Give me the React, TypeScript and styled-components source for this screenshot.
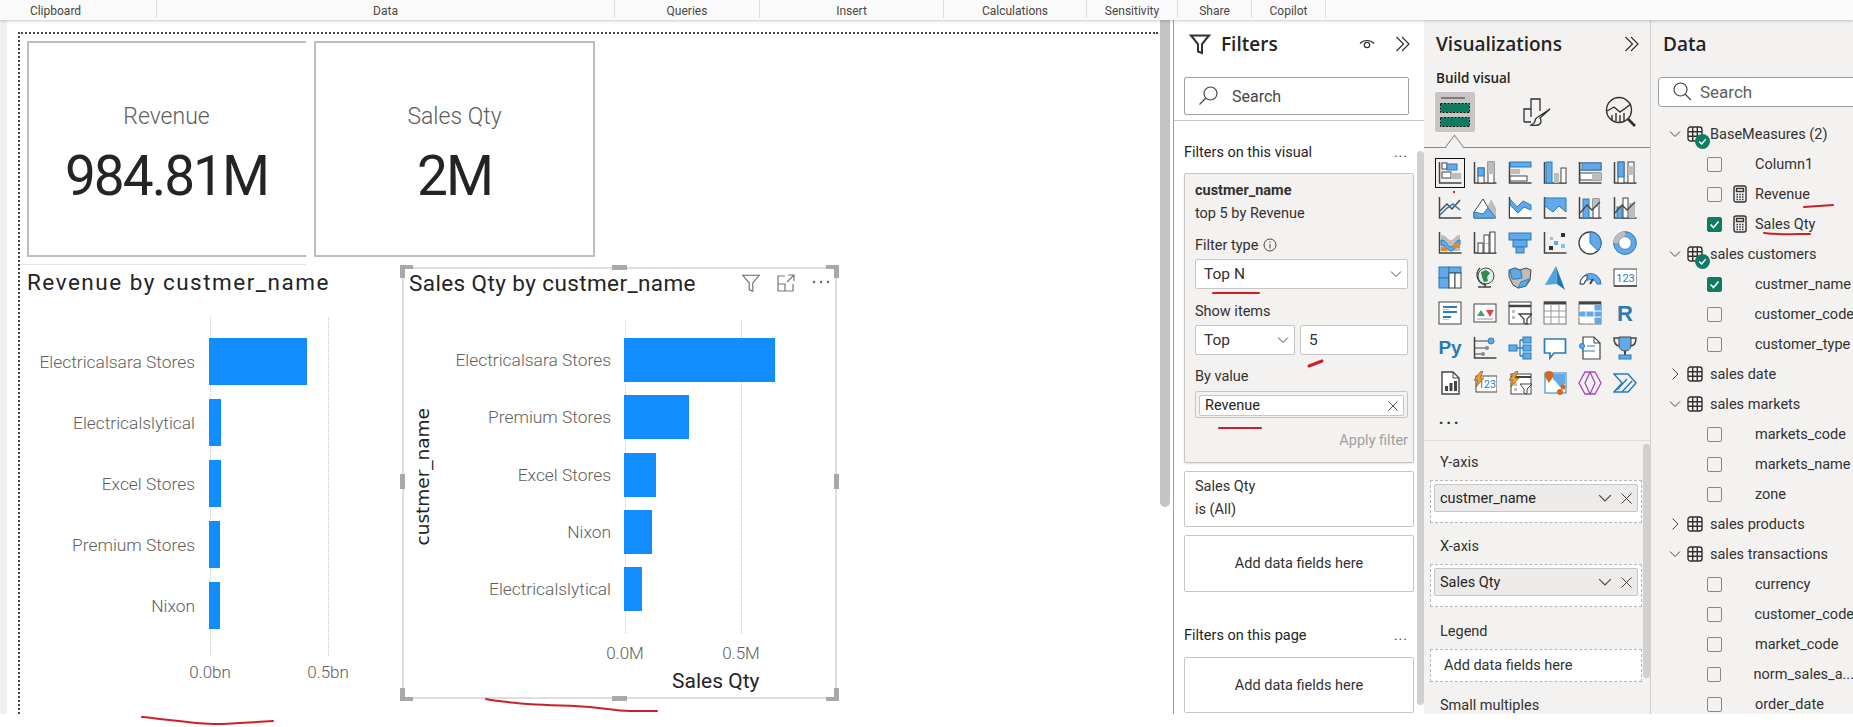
import { FunctionComponent, ReactNode } from 'react';
import styled, { createGlobalStyle, css } from 'styled-components';

const UI_FONT = '"Roboto", "Open Sans", sans-serif';
const DIN_FONT = '"Roboto", "Liberation Sans", sans-serif';
const DARK = '#444';
const BLUE = '#62a9e9';
const STROKE = '#2b7cb8';
const GRAY = '#bdbdbd';

const GlobalStyle = createGlobalStyle`
  * { box-sizing: border-box; }
  html, body { margin: 0; padding: 0; background: #fff; }
  body { font-family: ${UI_FONT}; color: #252423; }
`;

const Page = styled.div`
  position: relative;
  width: 1853px;
  height: 727px;
  overflow: hidden;
  background: #fff;
`;

const Ribbon = styled.div`
  position: relative;
  z-index: 2;
  display: flex;
  height: 20px;
  background: #fafafa;
  box-shadow: 0 1px 3px rgba(0, 0, 0, 0.22);
`;

const RibbonGroup = styled.div<{ $w: number; $pr?: number }>`
  width: ${p => p.$w}px;
  padding-right: ${p => p.$pr || 0}px;
  height: 18px;
  border-right: 1px solid #dcdcdc;
  text-align: center;
  font-size: 12px;
  line-height: 23px;
  color: #484644;
`;

const Main = styled.div`
  display: flex;
  height: 694px;
  overflow: hidden;
`;

const Gutter = styled.div`
  flex: none;
  width: 7px;
  background: #f0efee;
`;

const Report = styled.div`
  flex: none;
  width: 1140px;
  margin: 12px 0 0 11px;
  border-top: 2px dotted #444;
  border-left: 2px dotted #444;
`;

const CanvasScroll = styled.div`
  flex: none;
  width: 10px;
  height: 487px;
  margin-left: 2px;
  margin-right: 3px;
  border-radius: 0 0 5px 5px;
  background: #c4c4c4;
`;

const CardRow = styled.div`
  display: flex;
  gap: 8px;
  padding: 7px 0 0 7px;
`;

const KpiCard = styled.div<{ $w: number; $open?: boolean }>`
  display: flex;
  flex-direction: column;
  align-items: center;
  width: ${p => p.$w}px;
  height: 216px;
  padding-top: 58px;
  border: 2px solid #bdbdbd;
  ${p => p.$open && 'border-right: 0; padding-right: 2px;'}
  font-family: ${DIN_FONT};
`;

const KpiLabel = styled.div`
  height: 32px;
  font-size: 23px;
  font-weight: 300;
  line-height: 32px;
  color: #605e5c;
`;

const KpiValue = styled.div`
  margin-top: 11px;
  font-size: 55px;
  line-height: 64px;
  letter-spacing: -2px;
  color: #252423;
`;

const ChartRow = styled.div`
  display: flex;
  align-items: flex-start;
  margin-top: 7px;
`;

const ChartA = styled.div`
  width: 382px;
`;

const TopRule = styled.div`
  width: 286px;
  height: 1px;
  background: #e4e4e4;
`;

const ChartTitle = styled.div<{ $pl: number; $spacing?: number }>`
  padding-left: ${p => p.$pl}px;
  font-family: ${DIN_FONT};
  font-size: 22.5px;
  letter-spacing: ${p => p.$spacing || 0}px;
  line-height: 34px;
  white-space: nowrap;
  color: #252423;
`;

const PlotA = styled.div`
  position: relative;
  margin-top: 18px;
  width: 340px;
`;

const BarRows = styled.div<{ $top: number; $bottom: number; $gap: number }>`
  display: flex;
  flex-direction: column;
  gap: ${p => p.$gap}px;
  padding: ${p => p.$top}px 0 ${p => p.$bottom}px;
`;

const BarRow = styled.div<{ $label: number; $gap: number; $h: number }>`
  display: grid;
  grid-template-columns: ${p => p.$label}px 1fr;
  column-gap: ${p => p.$gap}px;
  align-items: center;
  height: ${p => p.$h}px;
`;

const BarLabel = styled.div`
  text-align: right;
  font-family: ${DIN_FONT};
  font-size: 17.4px;
  font-weight: 300;
  white-space: nowrap;
  color: #605e5c;
`;

const Bar = styled.div`
  position: relative;
  z-index: 1;
  height: 100%;
  background: #118dff;
`;

const GridLine = styled.div<{ $left: number }>`
  position: absolute;
  top: 0;
  bottom: 0;
  left: ${p => p.$left}px;
  border-left: 1px dotted #c8c6c4;
`;

const Ticks = styled.div<{ $pl: number; $mt: number }>`
  display: flex;
  margin-top: ${p => p.$mt}px;
  padding-left: ${p => p.$pl}px;
`;

const Tick = styled.div<{ $w: number }>`
  width: ${p => p.$w}px;
  text-align: center;
  font-family: ${DIN_FONT};
  font-size: 17px;
  font-weight: 300;
  line-height: 20px;
  color: #605e5c;
`;

const ChartB = styled.div`
  position: relative;
  width: 435px;
  height: 432px;
  margin-top: 3px;
  border: 2px solid #dedede;
`;

const ChartHead = styled.div`
  display: flex;
  align-items: center;
  justify-content: space-between;
  height: 28px;
  padding-right: 4px;
`;

const HeadIcons = styled.div`
  display: flex;
  gap: 15px;
`;

const ChartBody = styled.div`
  display: flex;
  margin-top: 23px;
`;

const AxisCol = styled.div`
  display: flex;
  align-items: center;
  justify-content: center;
  width: 36px;
  height: 313px;
`;

const VerticalTitle = styled.div`
  writing-mode: vertical-rl;
  transform: rotate(180deg);
  font-family: "DejaVu Sans", sans-serif;
  font-size: 18.5px;
  white-space: nowrap;
  color: #252423;
`;

const PlotB = styled.div`
  width: 390px;
`;

const PlotBInner = styled.div`
  position: relative;
`;

const AxisName = styled.div`
  margin-top: 8px;
  padding-left: 232px;
  font-family: ${DIN_FONT};
  font-size: 21px;
  line-height: 20px;
  color: #252423;
`;

const handlePlaces = {
  tl: 'left: -4px; top: -4px; width: 13px; height: 13px; border-top: 4px solid; border-left: 5px solid;',
  tr: 'right: -4px; top: -4px; width: 13px; height: 13px; border-top: 4px solid; border-right: 5px solid;',
  bl: 'left: -4px; bottom: -4px; width: 13px; height: 13px; border-bottom: 4px solid; border-left: 5px solid;',
  br: 'right: -4px; bottom: -4px; width: 13px; height: 13px; border-bottom: 4px solid; border-right: 5px solid;',
  t: 'left: 208px; top: -4px; width: 15px; height: 5px; background: currentColor;',
  b: 'left: 208px; bottom: -4px; width: 15px; height: 5px; background: currentColor;',
  l: 'left: -4px; top: 205px; width: 5px; height: 15px; background: currentColor;',
  r: 'right: -4px; top: 205px; width: 5px; height: 15px; background: currentColor;',
};

const Handle = styled.span<{ $at: keyof typeof handlePlaces }>`
  position: absolute;
  z-index: 2;
  color: #a8a8a8;
  ${p => css`${handlePlaces[p.$at]}`}
`;

const FiltersPane = styled.div`
  flex: none;
  position: relative;
  width: 251px;
  border-left: 1px solid #a19f9d;
  background: #fff;
`;

const PaneHead = styled.div<{ $pl: number }>`
  display: flex;
  align-items: center;
  height: 44px;
  margin-top: 2px;
  padding-left: ${p => p.$pl}px;
`;

const PaneTitle = styled.div<{ $ml?: number }>`
  margin-left: ${p => p.$ml || 0}px;
  font-family: "Open Sans", sans-serif;
  font-size: 19px;
  font-weight: 600;
  color: #252423;
`;

const PaneActions = styled.div<{ $gap: number; $right: number }>`
  display: flex;
  align-items: center;
  gap: ${p => p.$gap}px;
  margin-left: auto;
  margin-right: ${p => p.$right}px;
`;

const SearchBox = styled.div`
  display: flex;
  align-items: center;
  gap: 14px;
  height: 38px;
  margin: 11px 15px 0 10px;
  padding-left: 13px;
  border: 1px solid #a19f9d;
  border-radius: 2px;
  font-size: 16px;
  color: #484644;
`;

const PaneRule = styled.div`
  height: 1px;
  margin-top: 5px;
  background: #c8c6c4;
`;

const FiltersBody = styled.div`
  position: relative;
  padding-left: 10px;
  height: 573px;
`;

const PaneScroll = styled.div<{ $top: number; $h: number; $right: number }>`
  position: absolute;
  top: ${p => p.$top}px;
  right: ${p => p.$right}px;
  width: 7px;
  height: ${p => p.$h}px;
  border-radius: 4px;
  background: #d2d0ce;
`;

const SectionHead = styled.div<{ $mt: number }>`
  display: flex;
  align-items: center;
  justify-content: space-between;
  width: 225px;
  height: 24px;
  margin-top: ${p => p.$mt}px;
  font-size: 14.5px;
`;

const SectionDots = styled.span`
  letter-spacing: 1px;
  font-size: 14px;
  margin-right: 1px;
  color: #484644;
`;

const FilterCard = styled.div`
  width: 230px;
  height: 290px;
  margin-top: 9px;
  padding: 6px 5px 0 10px;
  background: #f3f2f1;
  border: 1px solid #c8c6c4;
  border-radius: 2px;
  box-shadow: 0 1px 2px rgba(0, 0, 0, 0.12);
`;

const CardText = styled.div<{ $mt?: number; $bold?: boolean; $muted?: boolean; $right?: boolean }>`
  display: flex;
  align-items: center;
  gap: 5px;
  justify-content: ${p => (p.$right ? 'flex-end' : 'flex-start')};
  height: 20px;
  margin-top: ${p => p.$mt || 0}px;
  font-size: 14.5px;
  font-weight: ${p => (p.$bold ? 700 : 400)};
  color: ${p => (p.$muted ? '#a19f9d' : '#323130')};
`;

const SelectBox = styled.div<{ $w: number; $mt?: number }>`
  display: flex;
  align-items: center;
  justify-content: space-between;
  width: ${p => p.$w}px;
  height: 30px;
  margin-top: ${p => p.$mt || 0}px;
  padding: 0 5px 0 8px;
  background: #fff;
  border: 1px solid #c8c6c4;
  border-radius: 2px;
  font-size: 15.5px;
  color: #323130;
`;

const SelectPair = styled.div`
  display: flex;
  gap: 5px;
  margin-top: 4px;
`;

const ValueWell = styled.div`
  height: 27px;
  margin-top: 5px;
  padding: 3px;
  border: 1px solid #c8c6c4;
  border-radius: 2px;
`;

const ValueChip = styled.div`
  display: flex;
  align-items: center;
  justify-content: space-between;
  height: 21px;
  padding: 0 5px;
  background: #fff;
  border: 1px solid #c8c6c4;
  border-radius: 2px;
  font-size: 14.5px;
`;

const PlainCard = styled.div<{ $mt: number; $h: number; $center?: boolean }>`
  display: flex;
  flex-direction: column;
  ${p => (p.$center ? 'align-items: center; justify-content: center;' : 'gap: 3px; padding: 5px 0 0 10px;')}
  width: 230px;
  height: ${p => p.$h}px;
  margin-top: ${p => p.$mt}px;
  border: 1px solid #c8c6c4;
  border-radius: 2px;
  font-size: 14.5px;
  color: #323130;
`;

const PlainLine = styled.div`
  height: 20px;
  line-height: 20px;
`;

const VizPane = styled.div`
  flex: none;
  position: relative;
  width: 227px;
  background: #f3f2f1;
  border-right: 1px solid #d2d0ce;
`;

const BuildLabel = styled.div`
  height: 20px;
  margin: 2px 0 0 12px;
  font-family: "Open Sans", sans-serif;
  font-size: 13.5px;
  font-weight: 600;
  line-height: 20px;
`;

const TabRow = styled.div`
  display: grid;
  grid-template-columns: 40px 40px 40px;
  column-gap: 43px;
  margin: 4px 0 0 11px;
`;

const VizTab = styled.div<{ $on?: boolean }>`
  display: flex;
  align-items: center;
  justify-content: center;
  height: 40px;
  background: ${p => (p.$on ? '#c8c6c4' : 'transparent')};
  border-radius: 2px;
`;

const TabRule = styled.div`
  position: relative;
  height: 16px;
  border-bottom: 1px solid #8a8886;
  &::after {
    content: '';
    position: absolute;
    left: 23px;
    bottom: -7px;
    width: 14px;
    height: 14px;
    background: #f3f2f1;
    border-top: 1px solid #8a8886;
    border-left: 1px solid #8a8886;
    transform: rotate(45deg) skew(8deg, 8deg);
  }
`;

const VizGrid = styled.div`
  position: relative;
  display: grid;
  grid-template-columns: repeat(6, 35px);
  grid-auto-rows: 35px;
  height: 293px;
  padding: 7.5px 0 0 8.5px;
  border-bottom: 1px solid #dedcda;
`;

const VizCell = styled.div<{ $on?: boolean }>`
  display: flex;
  align-items: center;
  justify-content: center;
  & > div {
    display: flex;
    align-items: center;
    justify-content: center;
    width: 30px;
    height: 30px;
    border: ${p => (p.$on ? '1px solid #111' : '0')};
  }
`;

const RedDot = styled.span`
  position: absolute;
  left: 29px;
  top: 43px;
  width: 2px;
  height: 2px;
  background: #d9252e;
`;

const MoreDots = styled.div`
  font-size: 17px;
  font-weight: 700;
  letter-spacing: 2.5px;
  color: #323130;
`;

const FieldWells = styled.div`
  position: relative;
  height: 273px;
  padding-top: 12px;
`;

const WellLabel = styled.div<{ $mt?: number; $last?: boolean }>`
  height: ${p => (p.$last ? 17 : 20)}px;
  margin: ${p => p.$mt || 0}px 0 ${p => (p.$last ? 0 : 7)}px 16px;
  font-size: 14.5px;
  line-height: ${p => (p.$last ? 17 : 20)}px;
  color: #323130;
`;

const Well = styled.div<{ $h: number }>`
  width: 212px;
  height: ${p => p.$h}px;
  margin-left: 6px;
  padding: 3px;
  background: #fff;
  border: 1px dashed #b9b7b5;
  font-size: 14.5px;
`;

const WellHint = styled.div`
  padding-left: 10px;
  line-height: 25px;
  color: #323130;
`;

const WellPill = styled.div`
  display: flex;
  align-items: center;
  gap: 9px;
  height: 28px;
  padding: 0 5px;
  background: #edebe9;
  border: 1px solid #c8c6c4;
  border-radius: 2px;
  span { margin-right: auto; }
`;

const DataPane = styled.div`
  flex: none;
  width: 203px;
  background: #f3f2f1;
  overflow: hidden;
`;

const DataSearch = styled.div`
  display: flex;
  align-items: center;
  gap: 7px;
  width: 220px;
  height: 30px;
  margin: 11px 0 0 7px;
  padding-left: 14px;
  background: #fff;
  border: 1px solid #a19f9d;
  border-radius: 4px;
  font-size: 17px;
  color: #605e5c;
`;

const Tree = styled.div`
  margin-top: 12px;
`;

const TreeRow = styled.div<{ $field?: boolean }>`
  display: flex;
  align-items: center;
  height: 30px;
  padding-left: ${p => (p.$field ? 56 : 18)}px;
  font-size: 14.5px;
  white-space: nowrap;
  color: #323130;
`;

const TableSlot = styled.span`
  position: relative;
  display: flex;
  margin-left: 6px;
  margin-right: 7px;
`;

const Badge = styled.span`
  position: absolute;
  left: 8px;
  top: 8px;
  display: flex;
  align-items: center;
  justify-content: center;
  width: 15px;
  height: 15px;
  border-radius: 50%;
  background: #0f7b63;
`;

const CheckBox = styled.span<{ $on?: boolean }>`
  display: flex;
  align-items: center;
  justify-content: center;
  width: 15px;
  height: 15px;
  border: 1px solid ${p => (p.$on ? '#0f7b63' : '#8a8886')};
  border-radius: 2px;
  background: ${p => (p.$on ? '#0f7b63' : 'transparent')};
`;

const CalcSlot = styled.span`
  display: flex;
  justify-content: center;
  width: 16px;
  margin: 0 7px 0 10px;
`;

const Scribbles = styled.svg`
  position: absolute;
  inset: 0;
  z-index: 3;
  pointer-events: none;
`;

const Chevron: FunctionComponent<{ dir?: 'down' | 'right'; size?: number }> = ({ dir = 'down', size = 12 }) => (
  <svg width={size} height={size} viewBox="0 0 12 12" fill="none" stroke="#484644" strokeWidth="1">
    <path d={dir === 'down' ? 'M1 3.5 6 8.5 11 3.5' : 'M3.5 0.5 9 6 3.5 11.5'} />
  </svg>
);

const Cross: FunctionComponent<{ size?: number }> = ({ size = 11 }) => (
  <svg width={size} height={size} viewBox="0 0 11 11" stroke="#484644" strokeWidth="1">
    <path d="M0.5 0.5 10.5 10.5M10.5 0.5 0.5 10.5" />
  </svg>
);

const DoubleChevron = () => (
  <svg width="16" height="16" viewBox="0 0 16 16" fill="none" stroke="#323130" strokeWidth="1.2">
    <path d="M1.5 1 8.5 8 1.5 15M7 1 14 8 7 15" />
  </svg>
);

const Funnel: FunctionComponent<{ size?: number; light?: boolean }> = ({ size = 22, light }) => (
  <svg width={size} height={size} viewBox="0 0 22 22" fill="none" stroke={light ? '#666' : '#323130'} strokeWidth={light ? 1.2 : 2}>
    <path d="M2 2.5h18l-7 8.5v9l-4-1.5V11z" />
  </svg>
);

const Expand = () => (
  <svg width="20" height="20" viewBox="0 0 20 20" fill="none" stroke="#777" strokeWidth="1.2">
    <path d="M9 3H2v15h15v-7M2 11h7v7M12 2h6v6M18 2l-7 7" />
  </svg>
);

const HeadDots = () => (
  <svg width="20" height="20" viewBox="0 0 20 20" fill="#666">
    <circle cx="3" cy="9" r="1.2" />
    <circle cx="10" cy="9" r="1.2" />
    <circle cx="17" cy="9" r="1.2" />
  </svg>
);

const Eye = () => (
  <svg width="16" height="14" viewBox="0 0 16 14" fill="none" stroke="#323130" strokeWidth="1.2">
    <path d="M1 6.5C4.5 2.500 11.500 2.500 15 6.500" />
    <circle cx="8" cy="8" r="2.700" />
  </svg>
);

const Lens: FunctionComponent<{ flip?: boolean }> = ({ flip }) => (
  <svg width="20" height="20" viewBox="0 0 20 20" fill="none" stroke="#484644" strokeWidth="1.2">
    {flip
      ? <path d="M1.500 18.500 7.500 12.500M19 7.500a6.500 6.500 0 1 1-13 0a6.500 6.500 0 0 1 13 0z" />
      : <path d="M18 18 12 12M14 7.500a6.500 6.500 0 1 1-13 0a6.500 6.500 0 0 1 13 0z" />}
  </svg>
);

const Info = () => (
  <svg width="14" height="14" viewBox="0 0 14 14" fill="none" stroke="#484644" strokeWidth="1">
    <circle cx="7" cy="7" r="6" />
    <path d="M7 6v4.500M7 3.500v1.200" />
  </svg>
);

const TableIcon = () => (
  <svg width="16" height="16" viewBox="0 0 16 16" fill="none" stroke="#323130" strokeWidth="1.4">
    <rect x="1" y="1" width="14" height="14" rx="2.500" />
    <path d="M5.700 1v14M10.300 1v14M1 5.700h14M1 10.300h14" />
  </svg>
);

const CalcIcon = () => (
  <svg width="14" height="18" viewBox="0 0 14 18" fill="none" stroke="#323130" strokeWidth="1.4">
    <rect x="1" y="1" width="12" height="16" rx="2" />
    <rect x="3.500" y="3.500" width="7" height="3" />
    <path d="M3.500 9.500h1.500M6.300 9.500h1.500M9 9.500h1.500M3.500 12h1.500M6.300 12h1.500M9 12h1.500M3.500 14.500h1.500M6.300 14.500h1.500M9 14.500h1.500" />
  </svg>
);

const Tick2 = ({ size = 11 }: { size?: number }) => (
  <svg width={size} height={size} viewBox="0 0 11 11" fill="none" stroke="#fff" strokeWidth="1.6">
    <path d="M1.500 5.500 4.500 8.500 9.500 2.500" />
  </svg>
);

const rc = (x: number, y: number, w: number, h: number, fill: string, stroke = 'none') => (
  <rect x={x} y={y} width={w} height={h} fill={fill} stroke={stroke} />
);
const bl = (x: number, y: number, w: number, h: number) => rc(x, y, w, h, BLUE, STROKE);
const gr = (x: number, y: number, w: number, h: number) => rc(x, y, w, h, GRAY);
const wh = (x: number, y: number, w: number, h: number) => rc(x, y, w, h, '#fff', DARK);

const axis = <path d="M1.500 1v21h22" fill="none" stroke={DARK} strokeWidth="1.500" />;
const lineA = <path d="M2 17 9 9 14 14 22 6" fill="none" stroke={DARK} strokeWidth="1.300" />;

const VIZ_ICONS: ReactNode[] = [
  <>{axis}{rc(4, 2, 5, 6, '#fff', DARK)}{bl(9, 3, 10, 6)}{rc(4, 11, 9, 6, '#fff', DARK)}{gr(13, 12, 10, 6)}</>,
  <>{axis}{wh(5, 7, 6, 15)}{bl(5, 7, 6, 8)}{wh(15, 1, 6, 21)}{gr(15, 1, 6, 12)}</>,
  <>{axis}{bl(2, 1, 21, 5)}{gr(2, 8, 10, 5)}{wh(2, 15, 17, 5)}</>,
  <>{axis}{bl(3, 1, 6, 21)}{gr(11, 12, 5, 10)}{wh(18, 7, 5, 15)}</>,
  <>{axis}{wh(2, 2, 21, 7)}{bl(4, 2, 19, 7)}{wh(2, 12, 21, 7)}{gr(14, 12, 9, 7)}</>,
  <>{axis}{wh(5, 1, 6, 21)}{bl(5, 1, 6, 15)}{wh(15, 1, 6, 21)}{gr(15, 5, 6, 9)}</>,
  <>{axis}<path d="M2 15 9 8 14 13 22 4" fill="none" stroke={DARK} strokeWidth="1.300" /><path d="M2 19 9 12 15 8 22 14" fill="none" stroke={STROKE} strokeWidth="1.600" /></>,
  <><path d="M10 22 18 3 23 12v10z" fill={GRAY} /><path d="M1 22v-6L10 3l11 19z" fill="#fff" stroke={DARK} /><path d="M1 22v-6l9 2 5-6 8 10z" fill={BLUE} stroke={STROKE} /></>,
  <>{axis}<path d="M2 4 9 12 16 6 23 9v12H2z" fill="#fff" /><path d="M2 3 9 11 15 5 23 9v5l-7-3-6 6-8-8z" fill={BLUE} stroke={STROKE} /></>,
  <>{axis}<path d="M2 2h21v14l-7-6-6 6-8-6z" fill={BLUE} stroke={STROKE} /></>,
  <>{axis}{bl(5, 3, 6, 19)}{wh(15, 3, 6, 19)}{gr(15, 3, 6, 8)}{lineA}</>,
  <>{axis}{bl(4, 11, 5, 11)}{wh(10, 2, 5, 20)}{gr(16, 7, 6, 15)}{lineA}</>,
  <>{axis}<path d="M3 4c6 0 6 5 10 5s4-5 9-5v16H3z" fill={GRAY} /><path d="M3 9c6 0 6 7 10 7s4-7 9-7v5c-5 0-5 6-9 6S9 14 3 14z" fill={BLUE} stroke={STROKE} />{rc(3, 16, 6, 4, '#e08a2c')}{rc(16, 13, 6, 4, '#e08a2c')}</>,
  <>{axis}{wh(5, 12, 5, 10)}{wh(11, 4, 5, 18)}{wh(17, 1, 5, 21)}<path d="M11 13h5V1h1v11" fill={STROKE} /></>,
  <>{bl(1, 2, 22, 7)}{bl(5, 9, 14, 7)}{bl(8, 16, 8, 6)}</>,
  <>{axis}{rc(6, 15, 4, 4, '#323130')}{rc(7, 6, 3, 3, '#8fc1ec')}{rc(11, 10, 4, 4, BLUE)}{rc(18, 2, 4, 4, '#323130')}{rc(18, 13, 4, 4, '#8fc1ec')}</>,
  <><circle cx="12" cy="12" r="11" fill="#fff" stroke={DARK} strokeWidth="1.300" /><path d="M12 1a11 11 0 0 1 8 18.500L12 12z" fill={BLUE} stroke={STROKE} /></>,
  <><circle cx="12" cy="12" r="9" fill="none" stroke={BLUE} strokeWidth="5" /><circle cx="12" cy="12" r="11.300" fill="none" stroke={STROKE} strokeWidth="1" /><circle cx="12" cy="12" r="6.400" fill="#fff" stroke={STROKE} strokeWidth="1" /><path d="M3 12a9 9 0 0 1 9-9" fill="none" stroke={GRAY} strokeWidth="5" /></>,
  <>{bl(1, 1, 10, 11)}{bl(1, 12, 10, 10)}{bl(11, 1, 12, 6)}{wh(11, 7, 6, 15)}{wh(17, 7, 6, 15)}</>,
  <><path d="M5 21h13M12 18v3" stroke={DARK} strokeWidth="1.500" /><path d="M7 2a10 10 0 0 0 6 17" fill="none" stroke={DARK} strokeWidth="1.300" /><circle cx="13" cy="10" r="8" fill="#dfeee3" stroke={DARK} /><path d="M8 6l5-2 4 3-3 4 1 4-4 1-2-5z" fill="#2f8a4c" /></>,
  <><path d="M1 4 7 2l5 2 6-2 5 2-1 10-4 6-8 2-5-3-4-8z" fill={GRAY} stroke={DARK} /><path d="M2 4l5-2 6 3 1 7-6 1-4 0z" fill={BLUE} stroke={STROKE} /><path d="M13 16l8-3-3 7-8 2z" fill={BLUE} stroke={STROKE} /></>,
  <><path d="M13 0 22 24 14 18z" fill="#1f77b8" /><path d="M13 0 14 18 2 19z" fill="#4aa6dc" /></>,
  <><path d="M2 18a10.500 10.500 0 0 1 21 0h-4a7 7 0 0 0-13 0z" fill={BLUE} stroke={STROKE} /><path d="M2 18a10 10 0 0 1 7-9v4a7 7 0 0 0-3 5z" fill="#fff" stroke={DARK} /><path d="M12 18l3-5" stroke={DARK} strokeWidth="2" /></>,
  <>{rc(1, 3, 23, 17, '#fff', DARK)}<text x="12.500" y="16" textAnchor="middle" fontFamily="Roboto" fontSize="11" fill={STROKE}>123</text><path d="M1 20h23" stroke={DARK} strokeWidth="1.500" /></>,
  <>{rc(1, 1, 22, 22, '#fff', DARK)}<path d="M5 6h14M5 11h14M5 16h8" stroke={STROKE} strokeWidth="2" /><path d="M5 8.500h6M5 18.500h6" stroke={GRAY} strokeWidth="1" /></>,
  <>{rc(1, 3, 22, 18, '#fff', DARK)}<path d="M4 15 8 9 12 15z" fill="#4c9f5c" /><path d="M13 9h8l-4 7z" fill="#d9454a" /><path d="M4 18h16" stroke={GRAY} strokeWidth="1.500" /></>,
  <>{rc(1, 1, 22, 22, '#fff', DARK)}<path d="M1 5h22" stroke={DARK} strokeWidth="2.500" />{gr(4, 9, 3, 3)}{gr(4, 15, 3, 3)}<path d="M11 13h13l-5 5v5l-3-1v-4z" fill="#fff" stroke={DARK} strokeWidth="1.300" /></>,
  <>{rc(1, 1, 22, 22, '#fff', '#777')}<path d="M1 2h22" stroke={DARK} strokeWidth="3" /><path d="M8 4v19M16 4v19M1 10h22M1 16h22" stroke="#999" /></>,
  <>{rc(1, 1, 22, 22, '#fff', '#777')}<path d="M1 2h22" stroke={DARK} strokeWidth="3" />{rc(16, 4, 7, 19, BLUE)}{rc(1, 10, 22, 6, BLUE)}<path d="M8 4v19M16 4v19M1 10h22M1 16h22" stroke="#fff" /></>,
  <text x="12" y="20" textAnchor="middle" fontFamily="Liberation Sans" fontWeight="700" fontSize="22" fill="#2a7ab5">R</text>,
  <text x="12" y="18" textAnchor="middle" fontFamily="Liberation Sans" fontWeight="700" fontSize="19" fill="#2a7ab5">Py</text>,
  <>{axis}<path d="M2 5h13M2 12h12M2 18h9" stroke={DARK} strokeWidth="1.200" /><circle cx="18" cy="5" r="3" fill={BLUE} stroke={STROKE} /><circle cx="14" cy="12" r="2" fill="#888" /><circle cx="10" cy="18" r="2" fill="#888" /></>,
  <>{bl(1, 9, 8, 6)}{bl(15, 1, 8, 6)}{bl(15, 9, 8, 6)}{bl(15, 17, 8, 6)}<path d="M9 12h6M12 4h3M12 20h3M12 4v16" stroke={STROKE} strokeWidth="1.300" fill="none" /></>,
  <path d="M1.500 3h21v14H11l-4 5v-5H1.500z" fill="#fff" stroke={STROKE} strokeWidth="1.700" />,
  <><path d="M5 1h11l6 6v16H5z" fill="#fff" stroke={DARK} strokeWidth="1.200" /><path d="M16 1v6h6" fill="none" stroke={DARK} /><circle cx="4" cy="10" r="2.500" fill={BLUE} stroke={STROKE} /><path d="M9 10h8M4 15h13" stroke={STROKE} strokeWidth="1.200" /></>,
  <><path d="M6 2H1c0 6 2 8 6 8M18 2h5c0 6-2 8-6 8" fill="none" stroke={DARK} strokeWidth="1.500" /><path d="M6 1h12v8c0 4-3 6-6 6s-6-2-6-6z" fill={BLUE} stroke={DARK} /><path d="M12 15v4" stroke={DARK} strokeWidth="2" />{bl(6, 19, 12, 4)}</>,
  <><path d="M4 1h11l6 6v16H4z" fill="#fff" stroke={DARK} strokeWidth="1.400" /><path d="M15 1v6h6" fill="none" stroke={DARK} /><path d="M7 20v-5h3v5zM11.500 20v-8h3v8zM16 20V10h3v10z" fill={DARK} /></>,
  <>{rc(3, 5, 21, 16, '#fff', DARK)}<text x="14" y="17" textAnchor="middle" fontFamily="Roboto" fontSize="10.500" fill={STROKE}>123</text><path d="M8 0 1 9h4l-2 7 8-9H7l3-7z" fill="#f0a030" stroke="#8a5a14" strokeWidth="0.700" /></>,
  <>{rc(3, 3, 20, 20, '#fff', DARK)}<path d="M3 6h20" stroke={DARK} strokeWidth="2" />{gr(6, 12, 3, 3)}{gr(6, 17, 3, 3)}<path d="M12 13h12l-5 5v5l-3-1v-4z" fill="#fff" stroke={DARK} /><path d="M8 0 1 9h4l-2 7 8-9H7l3-7z" fill="#f0a030" stroke="#8a5a14" strokeWidth="0.700" /></>,
  <>{rc(2, 2, 21, 20, '#fff', STROKE)}<path d="M10 3h12v10l-5 3-4-5-3-3z" fill={BLUE} /><path d="M6 0c4 0 5 3 4 6L6 12 2 6C1 3 2 0 6 0z" fill="#d2691e" /><circle cx="20" cy="16" r="2.500" fill="#d2691e" /><circle cx="17" cy="21" r="3" fill="#d2691e" /></>,
  <g fill="none" stroke="#a64ab8" strokeWidth="1.300"><path d="M7 1h10l6 11-6 11H7L1 12z" /><path d="M12 1 7 12l5 11 5-11z" /></g>,
  <g fill="none" stroke={STROKE} strokeWidth="1.500"><path d="M1 3h14l8 9-8 9H1l8-9z" /><path d="M4 19 14 8M9 21 19 10" /></g>,
];

const TabFields = () => (
  <svg width="30" height="30" viewBox="0 0 30 30">
    <path d="M1 1h24" stroke="#333" strokeWidth="1" />
    <rect x="0.500" y="6.500" width="29" height="9" fill="#0f7b63" stroke="#111" strokeDasharray="2 1.500" />
    <rect x="0.500" y="20.500" width="29" height="9" fill="#0f7b63" stroke="#111" strokeDasharray="2 1.500" />
  </svg>
);

const TabFormat = () => (
  <svg width="30" height="30" viewBox="0 0 30 30" fill="none" stroke="#323130" strokeWidth="1.300">
    <path d="M1 25V12h7V2h9v12M8 12v8M8 25H1" />
    <path d="M27 12 15 20c-2 1-3 2-3 4 0 2-2 3-4 4 5 1 9 0 10-3 0-1 0-3-1-4z" />
  </svg>
);

const TabAnalytics = () => (
  <svg width="32" height="32" viewBox="0 0 32 32" fill="none" stroke="#323130" strokeWidth="1.400">
    <circle cx="14" cy="14" r="12.500" />
    <path d="M2 15l7-4 6 5 11-8M7 19v5M11 17v8M15 19v7M19 17v8" />
    <path d="M23 23l7 7" strokeWidth="2.600" />
  </svg>
);

interface BarItem { name: string; width: number; }

const BARS_A: BarItem[] = [
  { name: 'Electricalsara Stores', width: 98 },
  { name: 'Electricalslytical', width: 12 },
  { name: 'Excel Stores', width: 12 },
  { name: 'Premium Stores', width: 11 },
  { name: 'Nixon', width: 11 },
];

const BARS_B: BarItem[] = [
  { name: 'Electricalsara Stores', width: 151 },
  { name: 'Premium Stores', width: 65 },
  { name: 'Excel Stores', width: 32 },
  { name: 'Nixon', width: 28 },
  { name: 'Electricalslytical', width: 18 },
];

interface TreeItem { name: string; open?: boolean; badge?: boolean; field?: boolean; on?: boolean; calc?: boolean; }

const TREE: TreeItem[] = [
  { name: 'BaseMeasures (2)', open: true, badge: true },
  { name: 'Column1', field: true },
  { name: 'Revenue', field: true, calc: true },
  { name: 'Sales Qty', field: true, calc: true, on: true },
  { name: 'sales customers', open: true, badge: true },
  { name: 'custmer_name', field: true, on: true },
  { name: 'customer_code', field: true },
  { name: 'customer_type', field: true },
  { name: 'sales date' },
  { name: 'sales markets', open: true },
  { name: 'markets_code', field: true },
  { name: 'markets_name', field: true },
  { name: 'zone', field: true },
  { name: 'sales products' },
  { name: 'sales transactions', open: true },
  { name: 'currency', field: true },
  { name: 'customer_code', field: true },
  { name: 'market_code', field: true },
  { name: 'norm_sales_a...', field: true },
  { name: 'order_date', field: true },
];

const RIBBON = [
  { label: 'Clipboard', w: 157, pr: 45 },
  { label: 'Data', w: 458 },
  { label: 'Queries', w: 145 },
  { label: 'Insert', w: 184 },
  { label: 'Calculations', w: 143 },
  { label: 'Sensitivity', w: 91 },
  { label: 'Share', w: 74 },
  { label: 'Copilot', w: 74 },
];

const HANDLES: (keyof typeof handlePlaces)[] = ['tl', 'tr', 'bl', 'br', 't', 'b', 'l', 'r'];

export default function App() {
  return (
    <Page>
      <GlobalStyle />
      <Ribbon>
        {RIBBON.map(g => (
          <RibbonGroup key={g.label} $w={g.w} $pr={g.pr}>{g.label}</RibbonGroup>
        ))}
      </Ribbon>
      <Main>
        <Gutter />
        <Report>
          <CardRow>
            <KpiCard $w={279} $open>
              <KpiLabel>Revenue</KpiLabel>
              <KpiValue>984.81M</KpiValue>
            </KpiCard>
            <KpiCard $w={281}>
              <KpiLabel>Sales Qty</KpiLabel>
              <KpiValue>2M</KpiValue>
            </KpiCard>
          </CardRow>
          <ChartRow>
            <ChartA>
              <TopRule />
              <ChartTitle $pl={7} $spacing={1.5}>Revenue by custmer_name</ChartTitle>
              <PlotA>
                <GridLine $left={190} />
                <GridLine $left={308} />
                <BarRows $top={21} $bottom={27} $gap={14}>
                  {BARS_A.map(b => (
                    <BarRow key={b.name} $label={175} $gap={14} $h={47}>
                      <BarLabel>{b.name}</BarLabel>
                      <Bar style={{ width: b.width }} />
                    </BarRow>
                  ))}
                </BarRows>
              </PlotA>
              <Ticks $pl={131} $mt={6}>
                <Tick $w={118}>0.0bn</Tick>
                <Tick $w={118}>0.5bn</Tick>
              </Ticks>
            </ChartA>
            <ChartB>
              {HANDLES.map(h => <Handle key={h} $at={h} />)}
              <ChartHead>
                <ChartTitle $pl={5} $spacing={0.4}>Sales Qty by custmer_name</ChartTitle>
                <HeadIcons>
                  <Funnel size={20} light />
                  <Expand />
                  <HeadDots />
                </HeadIcons>
              </ChartHead>
              <ChartBody>
                <AxisCol><VerticalTitle>custmer_name</VerticalTitle></AxisCol>
                <PlotB>
                  <PlotBInner>
                    <GridLine $left={185} />
                    <GridLine $left={301} />
                    <BarRows $top={18} $bottom={22} $gap={13.25}>
                      {BARS_B.map(b => (
                        <BarRow key={b.name} $label={171} $gap={13} $h={44}>
                          <BarLabel>{b.name}</BarLabel>
                          <Bar style={{ width: b.width }} />
                        </BarRow>
                      ))}
                    </BarRows>
                  </PlotBInner>
                  <Ticks $pl={127} $mt={10}>
                    <Tick $w={116}>0.0M</Tick>
                    <Tick $w={116}>0.5M</Tick>
                  </Ticks>
                  <AxisName>Sales Qty</AxisName>
                </PlotB>
              </ChartBody>
            </ChartB>
          </ChartRow>
        </Report>
        <CanvasScroll />
        <FiltersPane>
          <PaneHead $pl={15}>
            <Funnel />
            <PaneTitle $ml={10}>Filters</PaneTitle>
            <PaneActions $gap={20} $right={13}>
              <Eye />
              <DoubleChevron />
            </PaneActions>
          </PaneHead>
          <SearchBox><Lens flip />Search</SearchBox>
          <PaneRule />
          <FiltersBody>
            <PaneScroll $top={11} $h={554} $right={0} />
            <SectionHead $mt={19}>
              Filters on this visual
              <SectionDots>...</SectionDots>
            </SectionHead>
            <FilterCard>
              <CardText $bold>custmer_name</CardText>
              <CardText $mt={3}>top 5 by Revenue</CardText>
              <CardText $mt={12}>Filter type <Info /></CardText>
              <SelectBox $w={213} $mt={4}>Top N <Chevron /></SelectBox>
              <CardText $mt={12}>Show items</CardText>
              <SelectPair>
                <SelectBox $w={100}>Top <Chevron /></SelectBox>
                <SelectBox $w={108}>5</SelectBox>
              </SelectPair>
              <CardText $mt={11}>By value</CardText>
              <ValueWell>
                <ValueChip>Revenue <Cross size={10} /></ValueChip>
              </ValueWell>
              <CardText $mt={12} $muted $right>Apply filter</CardText>
            </FilterCard>
            <PlainCard $mt={8} $h={56}>
              <PlainLine>Sales Qty</PlainLine>
              <PlainLine>is (All)</PlainLine>
            </PlainCard>
            <PlainCard $mt={8} $h={57} $center>Add data fields here</PlainCard>
            <SectionHead $mt={31}>
              Filters on this page
              <SectionDots>...</SectionDots>
            </SectionHead>
            <PlainCard $mt={10} $h={56} $center>Add data fields here</PlainCard>
          </FiltersBody>
        </FiltersPane>
        <VizPane>
          <PaneHead $pl={12}>
            <PaneTitle>Visualizations</PaneTitle>
            <PaneActions $gap={0} $right={10}><DoubleChevron /></PaneActions>
          </PaneHead>
          <BuildLabel>Build visual</BuildLabel>
          <TabRow>
            <VizTab $on><TabFields /></VizTab>
            <VizTab><TabFormat /></VizTab>
            <VizTab><TabAnalytics /></VizTab>
          </TabRow>
          <TabRule />
          <VizGrid>
            <RedDot />
            {VIZ_ICONS.map((icon, i) => (
              <VizCell key={i} $on={i === 0}>
                <div><svg width="24" height="24" viewBox="0 0 24 24">{icon}</svg></div>
              </VizCell>
            ))}
            <VizCell><MoreDots>...</MoreDots></VizCell>
          </VizGrid>
          <FieldWells>
            <PaneScroll $top={3} $h={234} $right={0} />
            <WellLabel>Y-axis</WellLabel>
            <Well $h={43}>
              <WellPill><span>custmer_name</span><Chevron size={14} /><Cross /></WellPill>
            </Well>
            <WellLabel $mt={14}>X-axis</WellLabel>
            <Well $h={43}>
              <WellPill><span>Sales Qty</span><Chevron size={14} /><Cross /></WellPill>
            </Well>
            <WellLabel $mt={15}>Legend</WellLabel>
            <Well $h={33}><WellHint>Add data fields here</WellHint></Well>
            <WellLabel $mt={15} $last>Small multiples</WellLabel>
          </FieldWells>
        </VizPane>
        <DataPane>
          <PaneHead $pl={12}>
            <PaneTitle>Data</PaneTitle>
            <PaneActions $gap={0} $right={-14}><DoubleChevron /></PaneActions>
          </PaneHead>
          <DataSearch><Lens />Search</DataSearch>
          <Tree>
            {TREE.map((t, i) => t.field ? (
              <TreeRow key={i} $field>
                <CheckBox $on={t.on}>{t.on && <Tick2 />}</CheckBox>
                <CalcSlot>{t.calc && <CalcIcon />}</CalcSlot>
                {t.name}
              </TreeRow>
            ) : (
              <TreeRow key={i}>
                <Chevron dir={t.open ? 'down' : 'right'} />
                <TableSlot>
                  <TableIcon />
                  {t.badge && <Badge><Tick2 size={9} /></Badge>}
                </TableSlot>
                {t.name}
              </TreeRow>
            ))}
          </Tree>
        </DataPane>
      </Main>
      <Scribbles width="1853" height="727" fill="none" stroke="#c9202c" strokeWidth="2" strokeLinecap="round">
        <path d="M142 717C175 720 200 725 221 724S255 722 273 721" />
        <path d="M486 699C510 704 545 705 574 706S612 711 630 711L657 711" />
        <path d="M1213 293H1259" />
        <path d="M1322 361 1309 366" strokeWidth="3" />
        <path d="M1219 428H1261" />
        <path d="M1804 207 1833 205" />
        <path d="M1764 233C1780 235 1795 234 1810 234" />
      </Scribbles>
    </Page>
  );
}
